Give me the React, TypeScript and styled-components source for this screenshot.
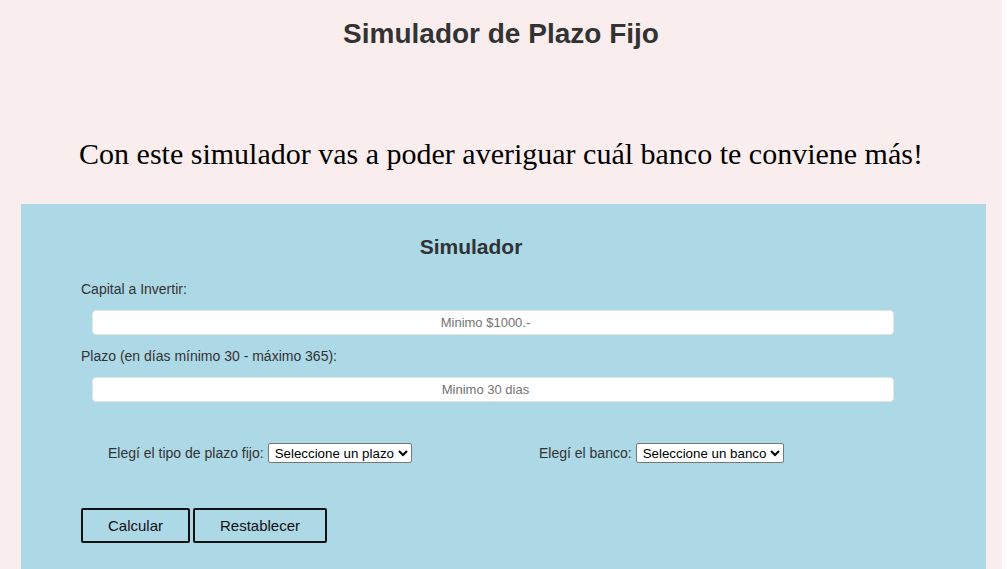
import React from "react";
import styled, { createGlobalStyle } from "styled-components";

const GlobalStyle = createGlobalStyle`
  html { background: #ffffff; }
  body {
    margin: 0;
    background: #ffffff;
    font-family: "Liberation Sans", Arial, sans-serif;
  }
`;

const Page = styled.div`
  width: 1002px;
  min-height: 569px;
  background: #f9eeed;
  overflow: hidden;
`;

const Title = styled.h1`
  margin: 18px 0 0;
  font-family: "Liberation Sans", Arial, sans-serif;
  font-size: 28px;
  line-height: 32px;
  font-weight: 700;
  color: #333333;
  text-align: center;
`;

const Intro = styled.h2`
  margin: 86px 0 0;
  font-family: "Liberation Serif", "Times New Roman", serif;
  font-size: 30px;
  line-height: 35px;
  font-weight: 400;
  color: #000000;
  text-align: center;
`;

const Panel = styled.section`
  margin: 33px 0 0 21px;
  width: 965px;
  min-height: 380px;
  background: #add8e6;
  padding: 30px 0 0 60px;
  box-sizing: border-box;
`;

const Form = styled.form`
  width: 780px;
  display: flex;
  flex-direction: column;
`;

const FormTitle = styled.h3`
  margin: 0;
  font-size: 21px;
  line-height: 26px;
  font-weight: 700;
  color: #2f3336;
  text-align: center;
`;

const Label = styled.label`
  display: block;
  font-size: 14px;
  line-height: 16px;
  color: #333333;
  margin-top: ${(p: { $top: number }) => p.$top}px;
`;

const TextInput = styled.input`
  display: block;
  box-sizing: border-box;
  width: 802px;
  height: 25px;
  margin: 13px 0 0 11px;
  padding: 0 15px 0 0;
  border: 1px solid #e4e4e4;
  border-radius: 4px;
  background: #ffffff;
  font-family: "Liberation Sans", Arial, sans-serif;
  font-size: 13px;
  text-align: center;
  outline: none;
  &::placeholder {
    color: #747474;
  }
`;

const SelectRow = styled.div`
  display: flex;
  align-items: center;
  margin-top: 41px;
  padding-left: 27px;
  height: 20px;
`;

const SelectGroup = styled.div`
  display: flex;
  align-items: center;
  width: ${(p: { $w?: number }) => (p.$w ? `${p.$w}px` : "auto")};
  font-size: 14px;
  color: #333333;
`;

const Select = styled.select`
  margin-left: 4px;
  height: 20px;
  font-family: "Liberation Sans", Arial, sans-serif;
  font-size: 13.33px;
  color: #000000;
  background: #ffffff;
  border: 1px solid #767676;
  border-radius: 2px;
  padding: 0 0 0 2px;
`;

const Buttons = styled.div`
  display: flex;
  gap: 3px;
  margin-top: 45px;
`;

const Button = styled.button`
  box-sizing: border-box;
  width: ${(p: { $w: number }) => p.$w}px;
  height: 35px;
  background: transparent;
  border: 2px solid #111111;
  border-radius: 2px;
  font-family: "Liberation Sans", Arial, sans-serif;
  font-size: 15px;
  color: #111111;
  cursor: pointer;
`;

export default function App() {
  return (
    <Page>
      <GlobalStyle />
      <Title>Simulador de Plazo Fijo</Title>
      <Intro>Con este simulador vas a poder averiguar cuál banco te conviene más!</Intro>
      <Panel>
        <Form onSubmit={(e) => e.preventDefault()}>
          <FormTitle>Simulador</FormTitle>
          <Label $top={21}>Capital a Invertir:</Label>
          <TextInput type="text" placeholder="Minimo $1000.-" />
          <Label $top={13}>Plazo (en días mínimo 30 - máximo 365):</Label>
          <TextInput type="text" placeholder="Minimo 30 dias" />
          <SelectRow>
            <SelectGroup $w={431}>
              Elegí el tipo de plazo fijo:
              <Select defaultValue="">
                <option value="">Seleccione un plazo</option>
                <option value="30">30 días</option>
              </Select>
            </SelectGroup>
            <SelectGroup>
              Elegí el banco:
              <Select defaultValue="">
                <option value="">Seleccione un banco</option>
                <option value="a">Banco A</option>
              </Select>
            </SelectGroup>
          </SelectRow>
          <Buttons>
            <Button type="button" $w={109}>Calcular</Button>
            <Button type="reset" $w={134}>Restablecer</Button>
          </Buttons>
        </Form>
      </Panel>
    </Page>
  );
}
